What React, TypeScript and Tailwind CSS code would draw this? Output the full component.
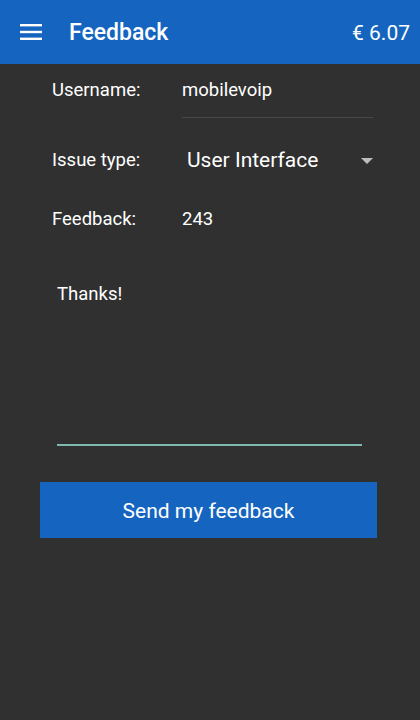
import React from 'react';

const Hamburger: React.FC = () => (
    <svg width="22" height="16" viewBox="0 0 22 16" className="shrink-0">
        <rect x="0" y="0" width="22" height="2.4" fill="#fff" />
        <rect x="0" y="6.8" width="22" height="2.4" fill="#fff" />
        <rect x="0" y="13.6" width="22" height="2.4" fill="#fff" />
    </svg>
);

const App: React.FC = () => {
    return (
        <div className="min-h-screen w-full bg-[#303030] text-white font-['Roboto',sans-serif]">
            {/* app bar */}
            <div className="h-16 bg-[#1565c0] flex items-center pl-5 pr-[10px]">
                <Hamburger />
                <h1 className="ml-[27px] pt-[3px] text-[23px] font-medium">Feedback</h1>
                <div className="ml-auto pt-[3px] text-[21px]">€ 6.07</div>
            </div>

            <div className="flex flex-col">
                <div className="flex ml-[52px]">
                    <div className="w-[130px] pt-[13px] text-[18.5px] leading-[26px]">Username:</div>
                    <div className="w-[191px] h-[54px] pt-[13px] text-[18.5px] leading-[26px] border-b border-[#484848]">
                        mobilevoip
                    </div>
                </div>

                <div className="flex items-center ml-[52px] mt-[19px] h-12">
                    <div className="w-[135px] text-[18.5px]">Issue type:</div>
                    <div className="w-[186px] flex items-center justify-between">
                        <span className="text-[21px]">User Interface</span>
                        <svg width="12" height="6" viewBox="0 0 12 6">
                            <path d="M0 0 L12 0 L6 6 Z" fill="#bdbdbd" />
                        </svg>
                    </div>
                </div>

                <div className="flex items-center ml-[52px] mt-[11px] h-12">
                    <div className="w-[130px] text-[18.5px]">Feedback:</div>
                    <div className="text-[18.5px]">243</div>
                </div>

                <div className="ml-[57px] w-[305px] mt-[38px] h-[164px] border-b-2 border-[#80b8b0] text-[18.5px] leading-6">
                    Thanks!
                </div>

                <button className="ml-10 mt-9 w-[337px] h-14 pt-[3px] bg-[#1565c0] text-[21px] text-white">
                    Send my feedback
                </button>
            </div>
        </div>
    );
};

export default App;
